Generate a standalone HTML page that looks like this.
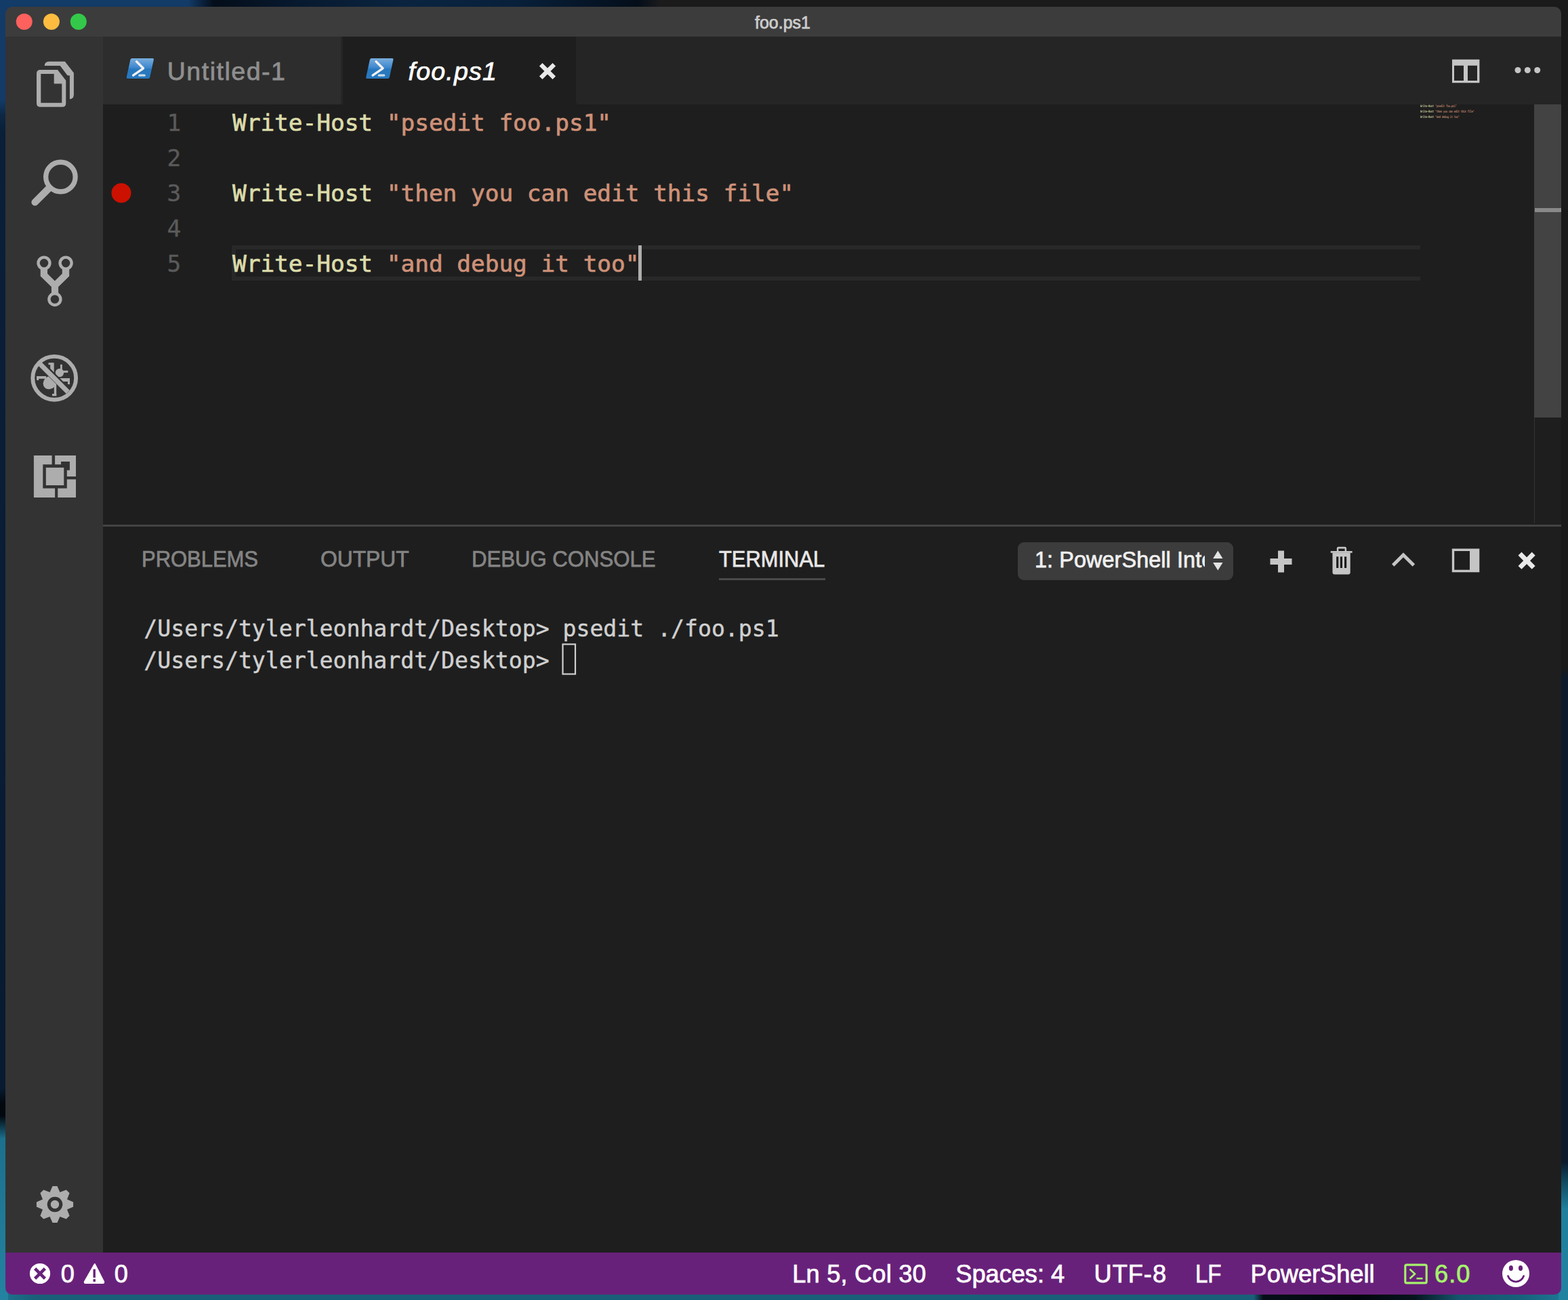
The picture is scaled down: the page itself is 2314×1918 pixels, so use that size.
<!DOCTYPE html>
<html><head><meta charset="utf-8"><title>foo.ps1</title>
<style>
html,body{margin:0;padding:0}
body{width:2314px;height:1918px;position:relative;overflow:hidden;background:#0a1f38;font-family:'Liberation Sans', sans-serif}
.a{position:absolute}
</style></head><body>
<!-- desktop background strips -->
<div class="a" style="left:0;top:0;width:2314px;height:14px;background:linear-gradient(90deg,#123b67 0,#123b67 278px,#0b2442 296px,#040d19 316px,#07182c 420px,#0a2440 600px,#08203a 760px,#040e1a 942px,#1b1b1b 974px,#1b1b1b 100%)"></div>
<div class="a" style="left:0;top:0;width:12px;height:1918px;background:linear-gradient(180deg,#123b67 0,#123b67 148px,#0d2744 170px,#0a1f38 196px,#091d35 900px,#081a30 1606px,#02080e 1628px,#02080e 1646px,#1b708d 1680px,#2383a1 1918px)"></div>
<div class="a" style="left:2300px;top:14px;width:14px;height:1904px;background:linear-gradient(180deg,#1a1a1a 0,#1a1a1a 970px,#0c1a2c 990px,#0c1a2c 1700px,#124a60 1730px,#1f7f9c 1770px,#2183a0 100%)"></div>
<div class="a" style="left:12px;top:1904px;width:2288px;height:14px;background:linear-gradient(90deg,#1d6f8a 0,#195f78 40px,#195f78 1838px,#060f18 1852px,#02070c 1990px,#06141e 2075px,#15556c 2140px,#17607a 2230px,#1c7591 2288px)"></div>
<!-- window -->
<div class="a" style="left:0;top:0;width:2314px;height:1918px;clip-path:inset(10px 10px 8px 8px round 10px)">
 <div class="a" style="left:8px;top:10px;width:2296px;height:44px;background:#3c3c3c"></div>
 <div class="a" style="left:8px;top:54px;width:144px;height:1794px;background:#333333"></div>
 <div class="a" style="left:152px;top:54px;width:2152px;height:100px;background:#252526"></div>
 <div class="a" style="left:152px;top:54px;width:354px;height:100px;background:#2d2d2d"></div>
 <div class="a" style="left:503.3px;top:54px;width:3px;height:100px;background:#252526"></div>
 <div class="a" style="left:506.3px;top:54px;width:343.7px;height:100px;background:#1e1e1e"></div>
 <div class="a" style="left:152px;top:154px;width:2152px;height:1694px;background:#1e1e1e"></div>
 <div class="a" style="left:850px;top:150px;width:4px;height:4px;background:radial-gradient(circle at 100% 0,#252526 3.6px,#1e1e1e 4.2px)"></div>
 <!-- current line -->
 <div class="a" style="left:342px;top:362px;width:1754px;height:52px;box-sizing:border-box;border:6px solid #282828;border-right:none"></div>
 <!-- cursor -->
 <div class="a" style="left:942.4px;top:362px;width:4.2px;height:52px;background:#aeafad"></div>
 <!-- scrollbar -->
 <div class="a" style="left:2264px;top:154px;width:1px;height:618px;background:#333"></div>
 <div class="a" style="left:2264px;top:154px;width:40px;height:462px;background:#434343"></div>
 <div class="a" style="left:2265px;top:307px;width:39px;height:5.6px;background:#898989"></div>
 <!-- panel -->
 <div class="a" style="left:152px;top:774px;width:2152px;height:3px;background:#444444"></div>
 <div class="a" style="left:1060.5px;top:853px;width:157px;height:3px;background:#4a4a4a"></div>
 <div class="a" style="left:1502px;top:800px;width:318px;height:56px;border-radius:9px;background:#3c3c3c"></div>
 <!-- status bar -->
 <div class="a" style="left:8px;top:1848px;width:2296px;height:62px;background:#68217a"></div>
 <span style="position:absolute;left:2096px;top:153.7px;line-height:4px;font-family:'DejaVu Sans Mono', 'Liberation Mono', monospace;font-size:3.32px;font-weight:bold;color:#dcdcaa;white-space:pre;opacity:.9;transform:scaleY(1.45);transform-origin:0 0">Write-Host <span style="color:#ce9178">&quot;psedit foo.ps1&quot;</span></span><span style="position:absolute;left:2096px;top:161.7px;line-height:4px;font-family:'DejaVu Sans Mono', 'Liberation Mono', monospace;font-size:3.32px;font-weight:bold;color:#dcdcaa;white-space:pre;opacity:.9;transform:scaleY(1.45);transform-origin:0 0">Write-Host <span style="color:#ce9178">&quot;then you can edit this file&quot;</span></span><span style="position:absolute;left:2096px;top:169.7px;line-height:4px;font-family:'DejaVu Sans Mono', 'Liberation Mono', monospace;font-size:3.32px;font-weight:bold;color:#dcdcaa;white-space:pre;opacity:.9;transform:scaleY(1.45);transform-origin:0 0">Write-Host <span style="color:#ce9178">&quot;and debug it too&quot;</span></span>
 <span id="title" style="position:absolute;left:1114.00px;top:17.34px;line-height:32px;font-family:'Liberation Sans', sans-serif;font-size:25px;color:#cccccc;letter-spacing:0px;white-space:pre;-webkit-text-stroke:0.75px;">foo.ps1</span><span id="tab1" style="position:absolute;left:246.80px;top:80.53px;line-height:49px;font-family:'Liberation Sans', sans-serif;font-size:37.44px;color:#8f8f8f;letter-spacing:1.55px;white-space:pre;-webkit-text-stroke:0.75px;">Untitled-1</span><span id="tab2" style="position:absolute;left:602.50px;top:80.53px;line-height:49px;font-family:'Liberation Sans', sans-serif;font-size:37.44px;color:#ffffff;letter-spacing:1.25px;white-space:pre;-webkit-text-stroke:0.75px;font-style:italic;">foo.ps1</span><span id="ln1" style="position:absolute;left:246.50px;top:158.60px;line-height:45px;font-family:'DejaVu Sans Mono', 'Liberation Mono', monospace;font-size:34.4px;color:#5a5a5a;letter-spacing:0px;white-space:pre;-webkit-text-stroke:0.35px;">1</span><span id="ln2" style="position:absolute;left:246.50px;top:210.60px;line-height:45px;font-family:'DejaVu Sans Mono', 'Liberation Mono', monospace;font-size:34.4px;color:#5a5a5a;letter-spacing:0px;white-space:pre;-webkit-text-stroke:0.35px;">2</span><span id="ln3" style="position:absolute;left:246.50px;top:262.60px;line-height:45px;font-family:'DejaVu Sans Mono', 'Liberation Mono', monospace;font-size:34.4px;color:#5a5a5a;letter-spacing:0px;white-space:pre;-webkit-text-stroke:0.35px;">3</span><span id="ln4" style="position:absolute;left:246.50px;top:314.60px;line-height:45px;font-family:'DejaVu Sans Mono', 'Liberation Mono', monospace;font-size:34.4px;color:#5a5a5a;letter-spacing:0px;white-space:pre;-webkit-text-stroke:0.35px;">4</span><span id="ln5" style="position:absolute;left:246.50px;top:366.60px;line-height:45px;font-family:'DejaVu Sans Mono', 'Liberation Mono', monospace;font-size:34.4px;color:#5a5a5a;letter-spacing:0px;white-space:pre;-webkit-text-stroke:0.35px;">5</span><span id="code1" style="position:absolute;left:343.00px;top:158.60px;line-height:45px;font-family:'DejaVu Sans Mono', 'Liberation Mono', monospace;font-size:34.4px;color:#dcdcaa;letter-spacing:0px;white-space:pre;-webkit-text-stroke:0.7px;">Write-Host <span style="color:#ce9178">&quot;psedit foo.ps1&quot;</span></span><span id="code3" style="position:absolute;left:343.00px;top:262.60px;line-height:45px;font-family:'DejaVu Sans Mono', 'Liberation Mono', monospace;font-size:34.4px;color:#dcdcaa;letter-spacing:0px;white-space:pre;-webkit-text-stroke:0.7px;">Write-Host <span style="color:#ce9178">&quot;then you can edit this file&quot;</span></span><span id="code5" style="position:absolute;left:343.00px;top:366.60px;line-height:45px;font-family:'DejaVu Sans Mono', 'Liberation Mono', monospace;font-size:34.4px;color:#dcdcaa;letter-spacing:0px;white-space:pre;-webkit-text-stroke:0.7px;">Write-Host <span style="color:#ce9178">&quot;and debug it too&quot;</span></span><span id="p1" style="position:absolute;left:208.80px;top:803.32px;line-height:43px;font-family:'Liberation Sans', sans-serif;font-size:33.0px;color:#848484;letter-spacing:0px;white-space:pre;-webkit-text-stroke:0.75px;transform:scaleX(0.938);transform-origin:0 50%;">PROBLEMS</span><span id="p2" style="position:absolute;left:472.75px;top:803.32px;line-height:43px;font-family:'Liberation Sans', sans-serif;font-size:33.0px;color:#848484;letter-spacing:0px;white-space:pre;-webkit-text-stroke:0.75px;transform:scaleX(0.963);transform-origin:0 50%;">OUTPUT</span><span id="p3" style="position:absolute;left:695.75px;top:803.32px;line-height:43px;font-family:'Liberation Sans', sans-serif;font-size:33.0px;color:#848484;letter-spacing:0px;white-space:pre;-webkit-text-stroke:0.75px;transform:scaleX(0.943);transform-origin:0 50%;">DEBUG CONSOLE</span><span id="p4" style="position:absolute;left:1060.75px;top:803.32px;line-height:43px;font-family:'Liberation Sans', sans-serif;font-size:33.0px;color:#e7e7e7;letter-spacing:0px;white-space:pre;-webkit-text-stroke:0.75px;transform:scaleX(0.936);transform-origin:0 50%;">TERMINAL</span><div id="selclip" style="position:absolute;left:1502px;top:800px;width:276px;height:56px;overflow:hidden"><span id="sel" style="position:absolute;left:25.00px;top:5.17px;line-height:42px;font-family:'Liberation Sans', sans-serif;font-size:32.4px;color:#f0f0f0;letter-spacing:0.08px;white-space:pre;-webkit-text-stroke:0.75px;">1: PowerShell Integrated Console</span></div><span id="t1" style="position:absolute;left:212.30px;top:905.78px;line-height:43px;font-family:'DejaVu Sans Mono', 'Liberation Mono', monospace;font-size:33.14px;color:#d0d0d0;letter-spacing:0px;white-space:pre;-webkit-text-stroke:0.45px;">/Users/tylerleonhardt/Desktop> psedit ./foo.ps1</span><span id="t2" style="position:absolute;left:212.30px;top:953.28px;line-height:43px;font-family:'DejaVu Sans Mono', 'Liberation Mono', monospace;font-size:33.14px;color:#d0d0d0;letter-spacing:0px;white-space:pre;-webkit-text-stroke:0.45px;">/Users/tylerleonhardt/Desktop> </span><span id="s_e" style="position:absolute;left:89.80px;top:1856.46px;line-height:47px;font-family:'Liberation Sans', sans-serif;font-size:36.2px;color:#ffffff;letter-spacing:0px;white-space:pre;-webkit-text-stroke:0.75px;">0</span><span id="s_w" style="position:absolute;left:168.70px;top:1856.46px;line-height:47px;font-family:'Liberation Sans', sans-serif;font-size:36.2px;color:#ffffff;letter-spacing:0px;white-space:pre;-webkit-text-stroke:0.75px;">0</span><span id="s_ln" style="position:absolute;left:1169.25px;top:1856.46px;line-height:47px;font-family:'Liberation Sans', sans-serif;font-size:36.2px;color:#ffffff;letter-spacing:0.2px;white-space:pre;-webkit-text-stroke:0.75px;">Ln 5, Col 30</span><span id="s_sp" style="position:absolute;left:1410.25px;top:1856.46px;line-height:47px;font-family:'Liberation Sans', sans-serif;font-size:36.2px;color:#ffffff;letter-spacing:0px;white-space:pre;-webkit-text-stroke:0.75px;">Spaces: 4</span><span id="s_enc" style="position:absolute;left:1614.50px;top:1856.46px;line-height:47px;font-family:'Liberation Sans', sans-serif;font-size:36.2px;color:#ffffff;letter-spacing:1.0px;white-space:pre;-webkit-text-stroke:0.75px;">UTF-8</span><span id="s_lf" style="position:absolute;left:1763.75px;top:1856.46px;line-height:47px;font-family:'Liberation Sans', sans-serif;font-size:36.2px;color:#ffffff;letter-spacing:0px;white-space:pre;-webkit-text-stroke:0.75px;transform:scaleX(0.912);transform-origin:0 50%;">LF</span><span id="s_ps" style="position:absolute;left:1845.50px;top:1856.46px;line-height:47px;font-family:'Liberation Sans', sans-serif;font-size:36.2px;color:#ffffff;letter-spacing:0px;white-space:pre;-webkit-text-stroke:0.75px;">PowerShell</span><span id="s_ver" style="position:absolute;left:2117.00px;top:1856.46px;line-height:47px;font-family:'Liberation Sans', sans-serif;font-size:36.2px;color:#a5f36c;letter-spacing:1.0px;white-space:pre;-webkit-text-stroke:0.75px;">6.0</span>
 <svg width="2314" height="1918" viewBox="0 0 2314 1918" style="position:absolute;left:0;top:0">
<defs>
<linearGradient id="psg" x1="0" y1="0" x2="0" y2="1">
<stop offset="0" stop-color="#79addc"/><stop offset=".45" stop-color="#3f88cf"/><stop offset=".55" stop-color="#2878bd"/><stop offset="1" stop-color="#2877be"/>
</linearGradient>
</defs>
<!-- traffic lights -->
<circle cx="35.75" cy="32" r="12" fill="#fc615d"/>
<circle cx="75.9" cy="32" r="12" fill="#fdbc40"/>
<circle cx="115.8" cy="32" r="12" fill="#34c84a"/>
<!-- explorer -->
<g fill="#adadad">
<path fill-rule="evenodd" d="M59.5,103 H85 L97.3,118.8 V152.3 Q97.3,157.8 91.8,157.8 H59.5 Q54,157.8 54,152.3 V108.5 Q54,103 59.5,103Z M60.3,108.9 V151.7 H91.3 V123.5 H79.7 V108.9Z"/>
<path d="M65.7,97.1 Q66,90.8 72.5,90.8 H95.8 L108.9,107.4 V140 Q108.6,146 102.9,146.3 V111.5 L99.5,111.3 L88.7,97.1Z"/>
</g>
<!-- search -->
<circle cx="89.4" cy="261" r="21.75" fill="none" stroke="#adadad" stroke-width="7.3"/>
<path d="M72.5,277.5 L51.6,298.4" stroke="#adadad" stroke-width="10.4" stroke-linecap="round"/>
<!-- scm -->
<g fill="none" stroke="#adadad" stroke-width="4.4">
<circle cx="65" cy="388.1" r="8.5"/><circle cx="97.1" cy="388.1" r="8.5"/><circle cx="80.9" cy="441.5" r="8.5"/>
</g>
<polygon fill="#adadad" points="59.7,395.5 70,395.5 70,403.8 80.9,414.6 91.8,403.8 91.8,395.5 102.2,395.5 102.2,407.5 86.1,423.2 86.1,434 75.9,434 75.9,423.2 59.7,407.5"/>
<!-- debug -->
<g>
<g fill="#adadad" stroke="none">
<ellipse cx="73.5" cy="564.5" rx="10.5" ry="9.2" transform="rotate(-45 73.5 564.5)"/>
<circle cx="88" cy="550" r="6.2"/>
<rect x="54.2" y="555" width="14" height="3.8"/><rect x="54.2" y="555" width="3" height="6"/>
<rect x="74.2" y="535.2" width="5.5" height="14"/><rect x="71.5" y="535.2" width="6" height="3"/>
<rect x="89" y="537.8" width="2.8" height="8"/>
<rect x="90" y="546.8" width="10.3" height="3"/>
<rect x="88" y="558" width="15" height="5"/><rect x="100" y="558" width="3" height="9"/>
<rect x="79.8" y="566" width="3.4" height="18"/><rect x="77" y="581" width="6.2" height="3.2"/>
</g>
<path d="M59.1,535.8 L101.5,578.2" stroke="#333333" stroke-width="10"/>
<path d="M57.8,535.8 L100.2,578.2" stroke="#adadad" stroke-width="7.1"/>
<circle cx="80.2" cy="557.8" r="31.9" fill="none" stroke="#adadad" stroke-width="5.9"/>
</g>
<!-- extensions -->
<g fill="#adadad">
<polygon points="49.9,672 76.6,672 76.6,685.2 63.3,685.2 63.3,720.6 81.1,720.6 81.1,733.9 49.9,733.9"/>
<polygon points="81.1,672 112,672 112,703.1 98.8,703.1 98.8,693.8 102.9,693.8 102.9,681.1 90.05,681.1 90.05,685.2 81.1,685.2"/>
<polygon points="98.8,707.35 112,707.35 112,733.9 85.3,733.9 85.3,720.6 98.8,720.6"/>
<rect x="67.8" y="689.9" width="26.5" height="26.1"/>
</g>
<!-- gear -->
<polygon fill="#adadad" points="73.54,1758.98 77.53,1749.92 84.47,1749.92 88.46,1758.98 97.69,1755.40 102.60,1760.31 99.02,1769.54 108.08,1773.53 108.08,1780.47 99.02,1784.46 102.60,1793.69 97.69,1798.60 88.46,1795.02 84.47,1804.08 77.53,1804.08 73.54,1795.02 64.31,1798.60 59.40,1793.69 62.98,1784.46 53.92,1780.47 53.92,1773.53 62.98,1769.54 59.40,1760.31 64.31,1755.40"/>
<circle cx="81" cy="1777" r="8.75" fill="#adadad" stroke="#333333" stroke-width="5.1"/>
<!-- ps icons -->
<g transform="translate(0,0)">
<path d="M194.6,85.4 H225.6 Q228.2,85.4 227.6,88 L221.9,114 Q221.3,116.6 218.7,116.6 H187.9 Q185.3,116.6 185.9,114 L191.6,88 Q192.2,85.4 194.6,85.4Z" fill="#1d1d1d" opacity=".55"/>
<path d="M194.9,86 H225.2 Q227.4,86 226.9,88.2 L221.3,113.9 Q220.8,116 218.6,116 H188.4 Q186.2,116 186.7,113.8 L192.3,88.1 Q192.8,86 194.9,86Z" fill="url(#psg)"/>
<path d="M201.5,90.9 L211.5,100.8 L196.6,111.2" fill="none" stroke="#f4f0ee" stroke-width="3.4" stroke-linecap="round" stroke-linejoin="round"/>
<path d="M205.8,111.2 H213.2" fill="none" stroke="#c6dbe6" stroke-width="3.2" stroke-linecap="round"/>
</g>
<g transform="translate(353.5,0)">
<path d="M194.6,85.4 H225.6 Q228.2,85.4 227.6,88 L221.9,114 Q221.3,116.6 218.7,116.6 H187.9 Q185.3,116.6 185.9,114 L191.6,88 Q192.2,85.4 194.6,85.4Z" fill="#1d1d1d" opacity=".55"/>
<path d="M194.9,86 H225.2 Q227.4,86 226.9,88.2 L221.3,113.9 Q220.8,116 218.6,116 H188.4 Q186.2,116 186.7,113.8 L192.3,88.1 Q192.8,86 194.9,86Z" fill="url(#psg)"/>
<path d="M201.5,90.9 L211.5,100.8 L196.6,111.2" fill="none" stroke="#f4f0ee" stroke-width="3.4" stroke-linecap="round" stroke-linejoin="round"/>
<path d="M205.8,111.2 H213.2" fill="none" stroke="#c6dbe6" stroke-width="3.2" stroke-linecap="round"/>
</g>
<!-- tab close -->
<path d="M798.2,95.2 L817.8,114.8 M817.8,95.2 L798.2,114.8" stroke="#e8e8e8" stroke-width="6.4"/>
<!-- split editor -->
<path fill="#c5c5c5" fill-rule="evenodd" d="M2143,87.7 H2183.4 V122.3 H2143Z M2146,96.7 V119.1 H2160 V96.7Z M2166,96.7 V119.1 H2180 V96.7Z"/>
<g fill="#c5c5c5"><circle cx="2240" cy="103.5" r="4.5"/><circle cx="2254.3" cy="103.5" r="4.5"/><circle cx="2268.7" cy="103.5" r="4.5"/></g>
<!-- breakpoint -->
<circle cx="179" cy="284.75" r="14.5" fill="#cc1100"/>
<!-- select arrows -->
<polygon fill="#e4e4e4" points="1797.3,812.6 1804.5,824 1790.1,824"/>
<polygon fill="#e4e4e4" points="1790.1,830 1804.5,830 1797.3,841.4"/>
<!-- plus -->
<path d="M1874.5,828.5 H1906.5 M1890.5,812.5 V844.5" stroke="#c5c5c5" stroke-width="9"/>
<!-- trash -->
<g fill="#c5c5c5">
<path fill-rule="evenodd" d="M1975.3,806.8 H1984.6 Q1987.1,806.8 1987.1,809.3 V812.9 H1995.6 V815.7 H1963.7 V812.9 H1972.8 V809.3 Q1972.8,806.8 1975.3,806.8Z M1975.3,809.4 V812.9 H1984.6 V809.4Z"/>
<path fill-rule="evenodd" d="M1966.5,815.6 H1992.7 V844.3 Q1992.7,847.5 1989.5,847.5 H1969.7 Q1966.5,847.5 1966.5,844.3Z M1972.1,821.2 V838 H1975.3 V821.2Z M1977.8,821.2 V838 H1981 V821.2Z M1984,821.2 V838 H1987.2 V821.2Z"/>
</g>
<!-- chevron up -->
<path d="M2055.7,834 L2071,818.8 L2086.4,834" fill="none" stroke="#c5c5c5" stroke-width="5"/>
<!-- panel right -->
<path fill="#c5c5c5" fill-rule="evenodd" d="M2142.8,809.6 H2183.3 V844.2 H2142.8Z M2146.2,813 V840.8 H2169 V813Z"/>
<!-- panel close -->
<path d="M2243,817 L2263.2,837.4 M2263.2,817 L2243,837.4" stroke="#e8e8e8" stroke-width="7"/>
<!-- terminal cursor -->
<rect x="830.5" y="950.5" width="18.5" height="44" fill="none" stroke="#cfcfcf" stroke-width="2.2"/>
<!-- status icons -->
<circle cx="59" cy="1879" r="15.1" fill="#ffffff"/>
<path d="M51.6,1871.6 L66.4,1886.4 M66.4,1871.6 L51.6,1886.4" stroke="#68217a" stroke-width="4.6"/>
<path d="M138.9,1864.5 Q139.8,1863.3 140.7,1864.5 L154,1890.5 Q154.8,1893.8 152,1894 H126 Q123,1893.8 124,1890.5Z" fill="#ffffff"/>
<path d="M139.2,1872.5 V1885 M139.2,1887.3 V1891" stroke="#68217a" stroke-width="3.4"/>
<rect x="2073.8" y="1866.1" width="31.4" height="26.8" rx="2" fill="none" stroke="#a5f36c" stroke-width="3.1"/>
<path d="M2080.5,1872.5 L2088,1879.5 L2080.5,1886.5 M2090.5,1886.3 H2099.5" fill="none" stroke="#a5f36c" stroke-width="2.6"/>
<circle cx="2237" cy="1879" r="20" fill="#ffffff"/>
<ellipse cx="2229.9" cy="1871" rx="3.05" ry="4" fill="#68217a"/><ellipse cx="2244" cy="1871" rx="3.05" ry="4" fill="#68217a"/>
<path d="M2225.5,1882.6 A12.1,12.1 0 0 0 2248.6,1882.6" fill="none" stroke="#68217a" stroke-width="2.8" stroke-linecap="round"/>
</svg>
</div>
</body></html>
